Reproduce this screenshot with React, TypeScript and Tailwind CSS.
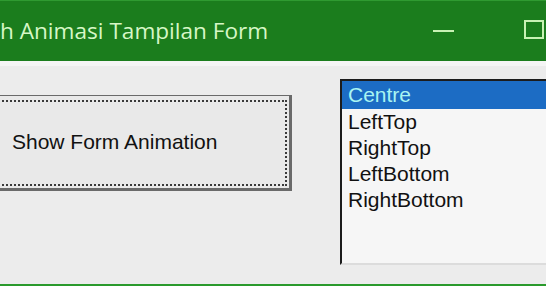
import React from "react";

const items = ["Centre", "LeftTop", "RightTop", "LeftBottom", "RightBottom"];

export default function App() {
  return (
    <div className="w-[546px] h-[286px] overflow-hidden flex flex-col bg-[#ececec]">
      {/* title bar */}
      <div className="h-[61px] shrink-0 bg-[#1b7d1d] border-t border-[#2f9a31] flex items-center">
        <span className="text-[22.6px] text-[#d6f7c6] font-['Open_Sans',sans-serif] leading-none mt-[1px]">
          h Animasi Tampilan Form
        </span>
        <div className="flex-1" />
        <div className="w-[21px] h-[2px] bg-[#c8f2b4] mr-[70px] mt-[-1px]" />
        <div className="w-[20px] h-[19px] border-2 border-[#c8f2b4] mr-[2px] mt-[-3px]" />
      </div>

      {/* body */}
      <div className="flex-1 flex flex-col border-t-[5px] border-[#f5f5f5]">
        <div className="flex-1 flex items-start">
          <div className="ml-[-10px] mt-[29px] w-[302px] h-[96px] bg-[#e9e9e9] border border-[#6a6a6a] border-r-[3px] border-b-[3px] p-[4px] pr-[2px] pb-[2px]">
            <div className="w-full h-full border-2 border-dotted border-[#3a3a3a] flex items-center pl-[15px]">
              <span className="text-[21px] text-[#111] font-['Liberation_Sans',sans-serif] mt-[-2px]">Show Form Animation</span>
            </div>
          </div>
          <div className="flex-1" />
          <div className="mt-[13px] w-[210px] h-[186px] mr-[-4px] bg-[#f6f6f6] border-l-2 border-t-2 border-[#1c1c1c] border-b-2 border-b-[#dcdcdc]">
            {items.map((it, i) => (
              <div
                key={it}
                className={
                  i === 0
                    ? "h-[28px] bg-[#1c6cc4] text-[#a9f4f2] pl-[6px] leading-[28px] text-[21px] font-['Liberation_Sans',sans-serif]"
                    : "h-[26px] text-[#111] pl-[6px] leading-[26px] text-[21px] font-['Liberation_Sans',sans-serif]"
                }
              >
                {it}
              </div>
            ))}
          </div>
        </div>
        <div className="h-[19px] shrink-0" />
        <div className="h-[3px] shrink-0 bg-[#2a9a2c]" />
      </div>
    </div>
  );
}
